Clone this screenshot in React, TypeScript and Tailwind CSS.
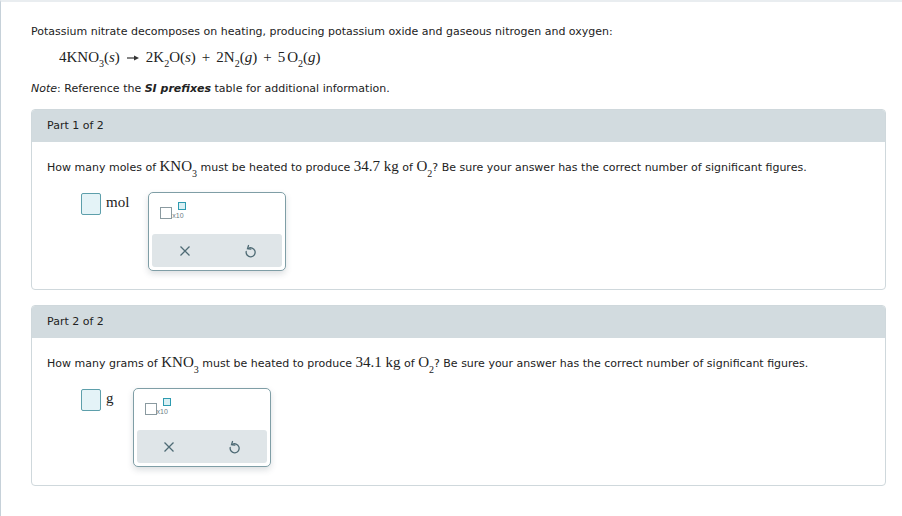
import React from 'react';

const sans = { fontFamily: '"DejaVu Sans", Verdana, sans-serif' };

const Sub = ({ children }: { children: React.ReactNode }) => (
  <sub className="text-[10px] align-baseline leading-none" style={{ verticalAlign: '-3px' }}>{children}</sub>
);

const Serif = ({ children, className = '' }: { children: React.ReactNode; className?: string }) => (
  <span className={'font-["Liberation_Serif",serif] text-[15px] ' + className}>{children}</span>
);

const SciIcon = () => (
  <div className="relative w-[28px] h-[18px]">
    <div className="absolute left-0 top-[5px] w-[12px] h-[12px] border border-[#8a9aa0]" />
    <span className="absolute left-[12px] top-[10px] text-[7px] leading-none text-[#6c7c82] font-['Liberation_Sans',sans-serif]">x10</span>
    <div className="absolute left-[18px] top-0 w-[8px] h-[8px] border-[1.5px] border-[#2e9bb0] bg-[#d9f0f4]" />
  </div>
);

const XIcon = () => (
  <svg width="12" height="12" viewBox="0 0 12 12" fill="none" stroke="#4f6b75" strokeWidth="1.3">
    <path d="M1.5 1.5 L10.5 10.5 M10.5 1.5 L1.5 10.5" />
  </svg>
);

const UndoIcon = () => (
  <svg width="12" height="14" viewBox="0 0 12 14" fill="none" stroke="#4f6b75" strokeWidth="1.3" strokeLinecap="round">
    <path d="M4.2 4.5 A4.5 4.5 0 1 1 2.2 7.5" />
    <path d="M4.5 1.5 L3.5 4.8 L6.8 5.2" />
  </svg>
);

const AnswerRow = ({ unit }: { unit: string }) => (
  <div className="flex items-start pl-[49px]">
    <div className="mt-[1px] w-[20px] h-[22px] rounded-[2px] border-[1.5px] border-[#5d9fab] bg-[#e4f3f7]" />
    <Serif className="ml-[5px] mt-[1px] text-[15px] leading-[18px] text-[#222]">{unit}</Serif>
    <div className="ml-[19px] w-[138px] h-[79px] rounded-[5px] border border-[#7f9ea6] bg-white shadow-[0_3px_6px_rgba(60,80,90,0.18)] p-[3px]">
      <div className="pl-[8px] pt-[6px] h-[38px]">
        <SciIcon />
      </div>
      <div className="flex h-[33px] rounded-[3px] bg-[#dfe5e8]">
        <div className="flex-1 flex items-center justify-center"><XIcon /></div>
        <div className="flex-1 flex items-center justify-center"><UndoIcon /></div>
      </div>
    </div>
  </div>
);

const PartCard = ({
  title, children,
}: { title: string; children: React.ReactNode }) => (
  <div className="w-[855px] rounded-[4px] border border-[#cfd8dc] overflow-hidden">
    <div className="h-[32px] bg-[#d2dbdf] flex items-center pl-[15px] text-[11px] text-[#222]">{title}</div>
    {children}
  </div>
);

export default function App() {
  return (
    <div className="w-[902px] h-[516px] bg-white border-l border-[#c6d1d9] border-t-2 border-t-[#e9edf0] overflow-hidden text-[#222]" style={sans}>
      <div className="pl-[30px] pt-[21px]">
        <p className="text-[11px] leading-[18px]">Potassium nitrate decomposes on heating, producing potassium oxide and gaseous nitrogen and oxygen:</p>
        <div className="mt-[4px] pl-[28px] h-[24px] flex items-center font-['Liberation_Serif',serif] text-[15px]">
          <span>4KNO<Sub>3</Sub>(<i>s</i>)</span>
          <svg width="12" height="8" viewBox="0 0 12 8" className="mx-[7px] mt-[2px]"><path d="M0 4 H8" stroke="#333" strokeWidth="1.2"/><path d="M7 1.5 L12 4 L7 6.5 Z" fill="#333"/></svg>
          <span>2K<Sub>2</Sub>O(<i>s</i>)</span>
          <span className="mx-[6px]">+</span>
          <span>2N<Sub>2</Sub>(<i>g</i>)</span>
          <span className="mx-[6px]">+</span>
          <span>5<span className="ml-[2px]">O</span><Sub>2</Sub>(<i>g</i>)</span>
        </div>
        <p className="mt-[11px] text-[11px] leading-[18px]"><i>Note</i>: Reference the <b><i>SI prefixes</i></b> table for additional information.</p>

        <div className="mt-[11px]">
          <PartCard title="Part 1 of 2">
            <div className="h-[147px] pt-[14px] pl-[15px]">
              <p className="text-[11px] leading-[20px]">How many moles of <Serif>KNO<Sub>3</Sub></Serif> must be heated to produce <Serif>34.7 kg</Serif> of <Serif>O<Sub>2</Sub></Serif>? Be sure your answer has the correct number of significant figures.</p>
              <div className="mt-[14px] -ml-[15px]">
                <AnswerRow unit="mol" />
              </div>
            </div>
          </PartCard>
        </div>
        <div className="mt-[15px]">
          <PartCard title="Part 2 of 2">
            <div className="h-[147px] pt-[14px] pl-[15px]">
              <p className="text-[11px] leading-[20px]">How many grams of <Serif>KNO<Sub>3</Sub></Serif> must be heated to produce <Serif>34.1 kg</Serif> of <Serif>O<Sub>2</Sub></Serif>? Be sure your answer has the correct number of significant figures.</p>
              <div className="mt-[14px] -ml-[15px]">
                <AnswerRow unit="g" />
              </div>
            </div>
          </PartCard>
        </div>
      </div>
    </div>
  );
}
